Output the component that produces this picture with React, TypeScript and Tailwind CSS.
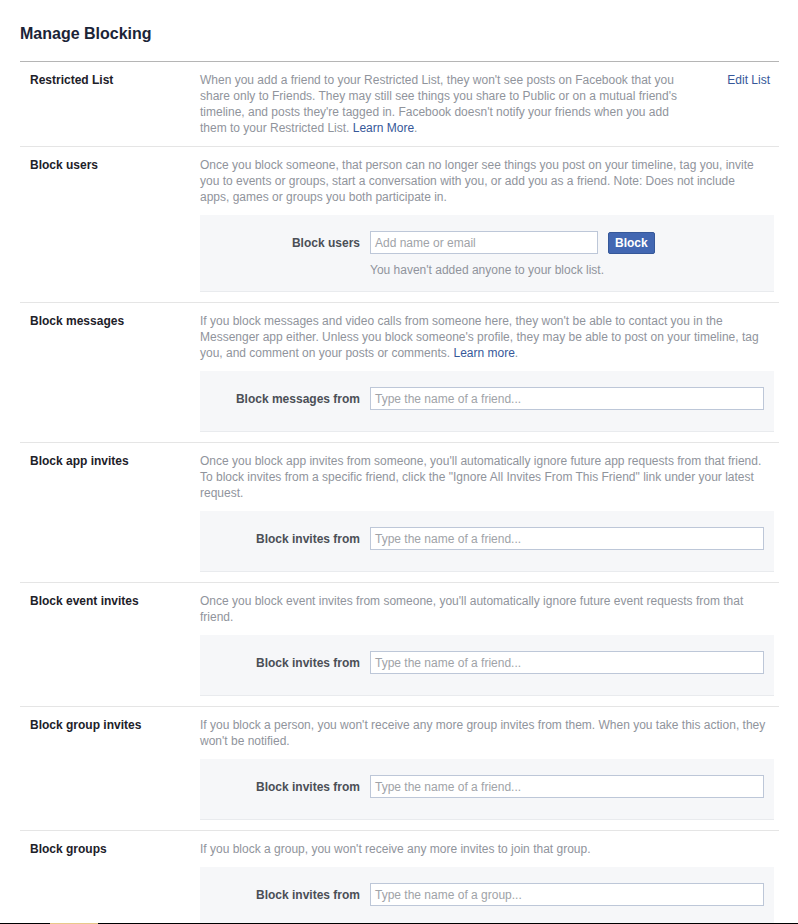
import React from "react";

const font = { fontFamily: '"Liberation Sans", Arial, Helvetica, sans-serif' };

function Row({ label, children }: { label: string; children: React.ReactNode }) {
  return (
    <div className="flex border-t border-[#e5e5e5] py-[10px]">
      <div className="w-[180px] shrink-0 pl-[10px] text-[12px] leading-[16px] font-bold text-[#1d2129]">
        {label}
      </div>
      <div className="flex-1 min-w-0">{children}</div>
    </div>
  );
}

function Desc({ lines }: { lines: React.ReactNode[] }) {
  return (
    <div className="text-[12px] leading-[16px] text-[#90949c]">
      {lines.map((l, i) => (
        <span key={i} className="block whitespace-nowrap">
          {l}
        </span>
      ))}
    </div>
  );
}

function Box({
  label,
  placeholder,
  withButton,
}: {
  label: string;
  placeholder: string;
  withButton?: boolean;
}) {
  return (
    <div
      className={`mt-[10px] mr-[5px] bg-[#f6f7f9] border-b border-[#e9ebee] pt-4 ${
        withButton ? "pb-[13px]" : "pb-[21px]"
      }`}
    >
      <div className="flex items-center">
        <div className="w-[170px] shrink-0 pr-[10px] text-right text-[12px] font-bold text-[#4b4f56]">
          {label}
        </div>
        {withButton ? (
          <>
            <div className="w-[228px] h-[23px] border border-[#bdc7d8] bg-white px-[4px] flex items-center text-[12px] text-[#a0a3a8]">
              {placeholder}
            </div>
            <button className="ml-[10px] h-[22px] px-[6px] bg-[#4267b2] border border-[#365899] text-white text-[12px] font-bold rounded-[2px] leading-[20px]">
              Block
            </button>
          </>
        ) : (
          <div className="w-[394px] h-[23px] border border-[#bdc7d8] bg-white px-[4px] flex items-center text-[12px] text-[#a0a3a8]">
            {placeholder}
          </div>
        )}
      </div>
      {withButton && (
        <div className="mt-[8px] pl-[170px] text-[12px] leading-[16px] text-[#90949c]">
          You haven't added anyone to your block list.
        </div>
      )}
    </div>
  );
}

const link = (t: string) => <span className="text-[#365899]">{t}</span>;

export default function App() {
  return (
    <div className="h-[924px] overflow-hidden flex flex-col bg-white" style={font}>
      <div className="flex-1 min-h-0 overflow-hidden pl-[20px] pr-[19px]">
        <h1 className="pt-[24px] pb-[18px] text-[16px] leading-[19px] font-bold text-[#1b2437]">
          Manage Blocking
        </h1>
        <div className="border-t border-[#b5b5b5]">
          <div className="flex py-[10px]">
            <div className="w-[180px] shrink-0 pl-[10px] text-[12px] leading-[16px] font-bold text-[#1d2129]">
              Restricted List
            </div>
            <div className="w-[505px] shrink-0">
              <Desc
                lines={[
                  "When you add a friend to your Restricted List, they won't see posts on Facebook that you",
                  "share only to Friends. They may still see things you share to Public or on a mutual friend's",
                  "timeline, and posts they're tagged in. Facebook doesn't notify your friends when you add",
                  <>them to your Restricted List. {link("Learn More")}.</>,
                ]}
              />
            </div>
            <div className="flex-1 text-right pr-[9px] text-[12px] leading-[16px] text-[#365899]">
              Edit List
            </div>
          </div>

          <Row label="Block users">
            <Desc
              lines={[
                "Once you block someone, that person can no longer see things you post on your timeline, tag you, invite",
                "you to events or groups, start a conversation with you, or add you as a friend. Note: Does not include",
                "apps, games or groups you both participate in.",
              ]}
            />
            <Box label="Block users" placeholder="Add name or email" withButton />
          </Row>

          <Row label="Block messages">
            <Desc
              lines={[
                "If you block messages and video calls from someone here, they won't be able to contact you in the",
                "Messenger app either. Unless you block someone's profile, they may be able to post on your timeline, tag",
                <>you, and comment on your posts or comments. {link("Learn more")}.</>,
              ]}
            />
            <Box label="Block messages from" placeholder="Type the name of a friend..." />
          </Row>

          <Row label="Block app invites">
            <Desc
              lines={[
                "Once you block app invites from someone, you'll automatically ignore future app requests from that friend.",
                'To block invites from a specific friend, click the "Ignore All Invites From This Friend" link under your latest',
                "request.",
              ]}
            />
            <Box label="Block invites from" placeholder="Type the name of a friend..." />
          </Row>

          <Row label="Block event invites">
            <Desc
              lines={[
                "Once you block event invites from someone, you'll automatically ignore future event requests from that",
                "friend.",
              ]}
            />
            <Box label="Block invites from" placeholder="Type the name of a friend..." />
          </Row>

          <Row label="Block group invites">
            <Desc
              lines={[
                "If you block a person, you won't receive any more group invites from them. When you take this action, they",
                "won't be notified.",
              ]}
            />
            <Box label="Block invites from" placeholder="Type the name of a friend..." />
          </Row>

          <Row label="Block groups">
            <Desc lines={["If you block a group, you won't receive any more invites to join that group."]} />
            <Box label="Block invites from" placeholder="Type the name of a group..." />
          </Row>
        </div>
      </div>
      <div className="h-[1px] shrink-0 bg-black flex">
        <div className="ml-[50px] w-[48px] bg-[#e8c98a]" />
      </div>
    </div>
  );
}
